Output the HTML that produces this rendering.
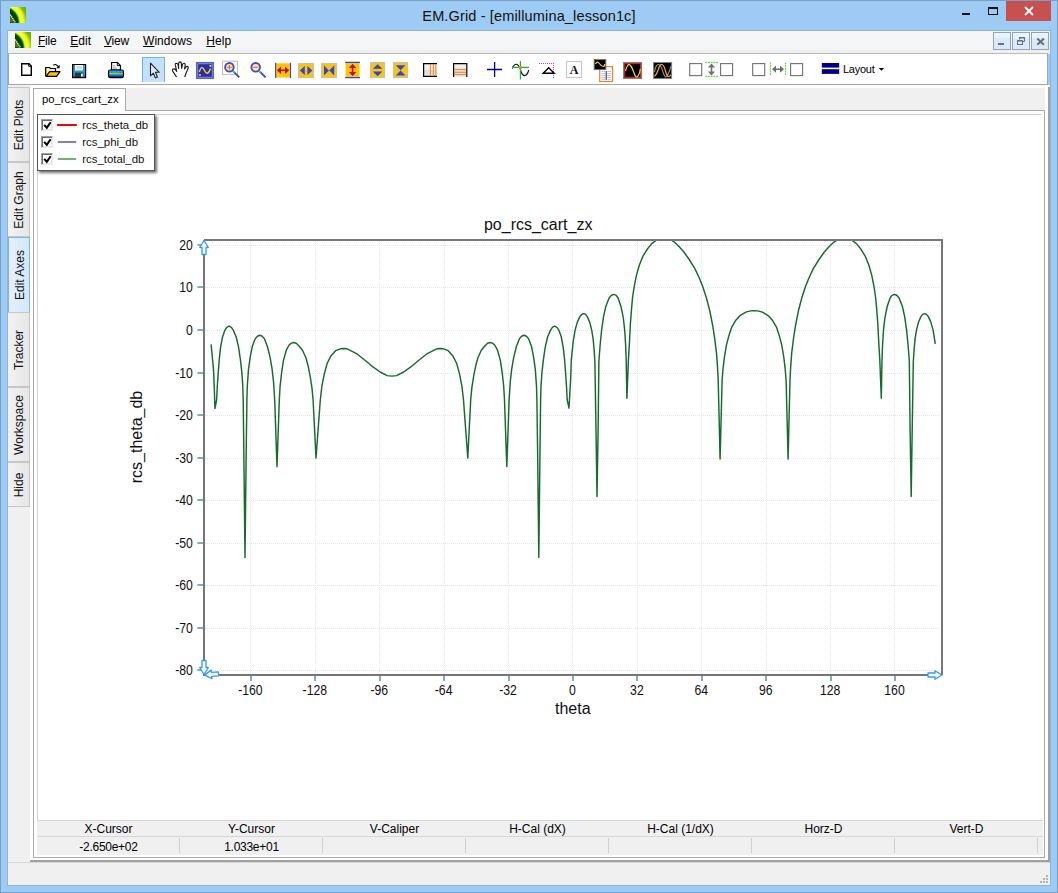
<!DOCTYPE html>
<html><head><meta charset="utf-8"><title>EM.Grid - [emillumina_lesson1c]</title>
<style>
html,body{margin:0;padding:0;}
body{width:1058px;height:893px;position:relative;overflow:hidden;background:#9ecbf3;font-family:"Liberation Sans",sans-serif;font-size:12px;color:#000;}
.abs{position:absolute;}
#frame{left:0;top:0;width:1056px;height:891px;border:1px solid #7a9fc7;}
#title{left:0;top:8px;width:1058px;text-align:center;font-size:14.5px;color:#111;letter-spacing:0.15px;}
#closebtn{left:1006px;top:1px;width:45px;height:20px;background:#c75050;}
#menubar{left:8px;top:31px;width:1042px;height:23px;background:linear-gradient(#f5f6f7 0,#f5f6f7 18px,#eeeff0 19px,#f0f0f0 23px);}
.menu{top:34px;font-size:12px;color:#000;letter-spacing:-0.25px;}
.menu u{text-decoration:underline;text-underline-offset:1px;}
.mdibtn{top:32px;width:18px;height:18px;border:1px solid #8fa4bd;background:linear-gradient(#eef4fc 0,#e9f1fb 30%,#dde9f6 35%,#dce8f5 100%);box-sizing:border-box;}
#toolbar{left:8px;top:53px;width:1040px;height:32px;background:#fff;border:1px solid #a5a5a5;box-sizing:border-box;border-top-color:#b9b9b9;}
#client{left:8px;top:85px;width:1042px;height:777px;background:#f0f0f0;}
#statusbar{left:8px;top:862px;width:1042px;height:23px;background:#f0f0f0;border-top:1px solid #d7d7d7;box-sizing:border-box;}
.vtab{left:8px;width:22px;border:1px solid #c6c6c6;border-left:none;box-sizing:border-box;background:linear-gradient(90deg,#f2f2f2,#e6e6e6);}
.vtab span{position:absolute;left:calc(50% + 0.7px);top:50%;transform:translate(-50%,-50%) rotate(-90deg);white-space:nowrap;font-size:12px;color:#111;}
.vtab.sel{background:linear-gradient(90deg,#e6f1fc,#d3e7fa);border-color:#7eb4ea;}
#tab{left:33px;top:88px;width:93px;height:23px;background:#fff;border:1px solid #a9a9a9;border-bottom:none;box-sizing:border-box;font-size:11.3px;}
#panel{left:33px;top:110px;width:1012px;height:748px;background:#fff;border:1px solid #a9a9a9;box-sizing:border-box;}

#legend{left:37px;top:114px;width:116px;height:55px;background:#fff;border:1px solid #555;box-shadow:2px 2px 2.5px rgba(0,0,0,.55);}
.cb{left:41px;width:12px;height:12px;box-sizing:border-box;border:1px solid #a0a0a0;border-right-color:#ececec;border-bottom-color:#ececec;background:#fff;box-shadow:inset 1px 1px 0 #6a6a6a,inset -1px -1px 0 #e6e6e6;}
.leg{left:82.3px;font-size:11.4px;color:#111;}
.gridh{top:822px;height:15px;font-family:"Liberation Sans",sans-serif;font-size:12px;text-align:center;color:#000;}
.gridv{top:840px;height:15px;font-size:12px;letter-spacing:-0.27px;text-align:center;color:#000;}
.gsep{top:838px;width:1px;height:15px;background:#d0d0d0;}
</style></head><body>
<div id="frame" class="abs"></div>
<div class="abs" style="left:7px;top:30px;width:1044px;height:856px;box-sizing:border-box;border:1px solid #8bb5de"></div>
<!-- title bar -->
<svg class="abs" style="left:10px;top:7px" width="16" height="16" viewBox="0 0 16 16"><defs><radialGradient id="lg1" gradientUnits="userSpaceOnUse" cx="-7.1" cy="15.8" r="28"><stop offset="0" stop-color="#5a8a10"/><stop offset=".37" stop-color="#42740a"/><stop offset=".41" stop-color="#013a00"/><stop offset=".53" stop-color="#024800"/><stop offset=".57" stop-color="#2c9a10"/><stop offset=".61" stop-color="#e4fc30"/><stop offset=".68" stop-color="#ffff3c"/><stop offset=".74" stop-color="#e8f830"/><stop offset=".79" stop-color="#b4ec10"/><stop offset=".86" stop-color="#80b800"/><stop offset="1" stop-color="#74a400"/></radialGradient></defs><rect width="16" height="16" fill="url(#lg1)"/><path d="M0.3 7.6L5.6 16" stroke="#fff" stroke-width="1.3" stroke-dasharray="1.3 0.7" fill="none"/><path d="M0 14.5L3.5 16H0Z" fill="#3a3040"/></svg>
<div id="title" class="abs">EM.Grid - [emillumina_lesson1c]</div>
<div class="abs" style="left:962px;top:13px;width:8px;height:2px;background:#111"></div>
<div class="abs" style="left:988px;top:7px;width:10px;height:8px;border:1px solid #111;border-top-width:2px;box-sizing:border-box"></div>
<div id="closebtn" class="abs"></div>
<svg class="abs" style="left:1024px;top:6px" width="10" height="10" viewBox="0 0 10 10"><path d="M1 1L9 9M9 1L1 9" stroke="#fff" stroke-width="1.8"/></svg>
<!-- menu bar -->
<div id="menubar" class="abs"></div>
<svg class="abs" style="left:15px;top:32px" width="16" height="16" viewBox="0 0 16 16"><rect width="16" height="16" fill="url(#lg1)"/><path d="M0.3 7.6L5.6 16" stroke="#fff" stroke-width="1.3" stroke-dasharray="1.3 0.7" fill="none"/><path d="M0 14.5L3.5 16H0Z" fill="#3a3040"/></svg>
<div class="abs menu" style="left:38px"><u>F</u>ile</div>
<div class="abs menu" style="left:70.3px;letter-spacing:0"><u>E</u>dit</div>
<div class="abs menu" style="left:104px"><u>V</u>iew</div>
<div class="abs menu" style="left:143px;letter-spacing:0.05px"><u>W</u>indows</div>
<div class="abs menu" style="left:206.3px;letter-spacing:0.1px"><u>H</u>elp</div>
<div class="abs mdibtn" style="left:993px"></div>
<div class="abs mdibtn" style="left:1012px"></div>
<div class="abs mdibtn" style="left:1031px"></div>
<div class="abs" style="left:998px;top:43px;width:6px;height:2px;background:#5f7289"></div>
<svg class="abs" style="left:1015.7px;top:35.5px" width="10" height="10" viewBox="0 0 10 10"><path d="M3.5 3.5V1.5H8.5V5.5H6.5" fill="none" stroke="#5f7289" stroke-width="1"/><path d="M3 1.75H9" stroke="#5f7289" stroke-width="1.5"/><rect x="1.5" y="4.5" width="5" height="4" fill="none" stroke="#5f7289"/><path d="M1 4.75H7" stroke="#5f7289" stroke-width="1.5"/></svg>
<svg class="abs" style="left:1036px;top:37px" width="9" height="9" viewBox="0 0 9 9"><path d="M1.3 1.5L7.9 7.7M7.9 1.5L1.3 7.7" stroke="#5f7289" stroke-width="2"/></svg>
<!-- toolbar -->
<div id="toolbar" class="abs"></div>
<div id="tbicons" class="abs" style="left:0;top:0">
<div class="abs" style="left:142px;top:57px;width:23px;height:25px;background:#c4e0fc;border:1px solid #6fb0f0;border-bottom:none;box-sizing:border-box"></div>
<svg class="abs" style="left:0;top:0" width="1058" height="90" viewBox="0 0 1058 90" font-family="Liberation Sans, sans-serif">
<!-- new -->
<path d="M21.7 63.7H29L31.3 66V75.3H21.7Z" fill="#fff" stroke="#000" stroke-width="1.4"/><path d="M28.7 63.7V66.3H31.3" fill="none" stroke="#000" stroke-width="1"/>
<!-- open -->
<path d="M45.7 76V67.5H49.5L50.5 68.5H55.5V72" fill="#fbeeb0" stroke="#000" stroke-width="1.2"/><path d="M46 76.3L49.7 71.7H60L56.5 76.3Z" fill="#f6c414" stroke="#000" stroke-width="1.2" stroke-linejoin="round"/><path d="M53.3 65.3Q56 63.3 58.5 66.8" fill="none" stroke="#000" stroke-width="1.1"/><path d="M59.6 64.8V68.3H56.3Z" fill="#000"/>
<!-- save -->
<rect x="72.6" y="64.6" width="13" height="13" fill="#1d9ee2" stroke="#000" stroke-width="1.2"/><rect x="75" y="65" width="8" height="5.4" fill="#fff"/><rect x="76.3" y="66.2" width="5.6" height="2.6" fill="#d4d4d4"/><rect x="75" y="72.6" width="8.3" height="4.6" fill="#333"/><rect x="81" y="73.6" width="1.8" height="3" fill="#fff"/><rect x="73.2" y="75.3" width="1.6" height="1.8" fill="#4848d0"/><rect x="83.6" y="75.3" width="1.6" height="1.8" fill="#4848d0"/><rect x="84" y="65.6" width="1" height="1" fill="#ddd"/>
<!-- print -->
<path d="M111.6 70V62.5H117.5L120.4 65.4V70Z" fill="#fff" stroke="#000" stroke-width="1.1"/><path d="M117.3 62.5V65.6H120.4" fill="none" stroke="#000" stroke-width="1"/><path d="M113 65.3H115M113 67H116M113 68.6H117" stroke="#999" stroke-width=".8"/>
<rect x="108.5" y="70" width="15" height="7.6" rx="1.6" fill="#1a2a9a" stroke="#000" stroke-width="1.1"/><rect x="109.2" y="70.6" width="13.6" height="1.5" fill="#1fa4ea"/><rect x="109.2" y="72.1" width="13.6" height="1.1" fill="#30c050"/><rect x="109.2" y="73.2" width="13.6" height="1" fill="#e8e030"/><rect x="109.2" y="74.2" width="13.6" height="1.4" fill="#1fa4ea"/><rect x="119.5" y="72.2" width="2" height="1" fill="#e03030"/>
<!-- pointer -->
<path d="M150.5 63.2V75.8L153.3 73.2L155.4 77.9L157.4 77L155.4 72.3H159.3Z" fill="#dcecfc" stroke="#222" stroke-width="1.1" stroke-linejoin="round"/>
<!-- hand -->
<path d="M176.6 77L173 71.6Q171.7 69.7 173.2 69Q174.6 68.5 175.7 70L176.7 71.4L175.3 64.9Q175.1 63.2 176.6 63.2Q177.9 63.3 178.1 65L178.6 68.4L178.6 63.5Q178.8 61.9 180 61.9Q181.3 62 181.4 63.5L181.6 68.3L182.5 64.6Q183 63 184.3 63.3Q185.5 63.7 185.2 65.3L184.5 69L186 67Q186.9 65.9 187.8 66.5Q188.6 67.2 188 68.6L186 73.2L184.7 77" fill="#fff" stroke="#1c1c1c" stroke-width="1.15" stroke-linejoin="round"/>
<!-- scope -->
<rect x="196.6" y="62.6" width="16.8" height="15.8" fill="#2a2ea0" stroke="#4a66e0" stroke-width="1.3"/><rect x="197.8" y="63.8" width="14.4" height="13.4" fill="none" stroke="#a8b8f0" stroke-width=".7"/><path d="M199.3 72Q201.5 64 204.5 70.5T210.5 68.5" fill="none" stroke="#f4d820" stroke-width="1.4"/><rect x="209.5" y="65" width="1.8" height="1.8" fill="#f4d820"/><rect x="199" y="74" width="1.8" height="1.8" fill="#f4d820"/>
<!-- zoom in -->
<rect x="222.5" y="61.2" width="15" height="13.4" fill="none" stroke="#bdbdbd" stroke-width="1"/>
<path d="M232.8 70.8L239.3 77.3" stroke="#3b48c8" stroke-width="1.9"/><path d="M232.6 70.6L234.4 72.4" stroke="#9ad020" stroke-width="1.4"/><circle cx="229.4" cy="67.3" r="4.3" fill="#f7e7b7" stroke="#3b4ed0" stroke-width="1.9"/><path d="M227 67.3H231.8M229.4 64.9V69.7" stroke="#f07010" stroke-width="1.1"/>
<!-- zoom out -->
<path d="M259.1 70.8L265.6 77.3" stroke="#3b48c8" stroke-width="1.9"/><path d="M258.9 70.6L260.7 72.4" stroke="#9ad020" stroke-width="1.4"/><circle cx="255.7" cy="67.3" r="4.3" fill="#f7e7b7" stroke="#3b4ed0" stroke-width="1.9"/><path d="M253.4 67.3H258" stroke="#f07010" stroke-width="1.2"/>
<!-- hfit -->
<rect x="275.2" y="63.3" width="15.6" height="14.2" fill="#fcc40c"/><path d="M275.6 62.8V78M290.5 62.8V78" stroke="#3048d8" stroke-width="1.1"/><path d="M276.8 70.3L281 66.6V69.5H285V66.6L289.2 70.3L285 74V71.1H281V74Z" fill="#c0101c"/>
<!-- hexpand -->
<rect x="298.6" y="63.6" width="15" height="14" fill="#fcc40c" stroke="#bdbdbd" stroke-width="1"/><path d="M299.8 70.5L304.8 66V75ZM312.4 70.5L307.4 66V75Z" fill="#3048d0"/>
<!-- hshrink -->
<rect x="321.6" y="63.6" width="15" height="14" fill="#fcc40c" stroke="#bdbdbd" stroke-width="1"/><path d="M324 65.6L329 70.5L324 75.4ZM334.2 65.6L329.2 70.5L334.2 75.4Z" fill="#3048d0"/>
<!-- vfit -->
<rect x="345.6" y="62.3" width="14" height="15.4" fill="#fcc40c"/><path d="M345.2 62.4H360M345.2 77.6H360" stroke="#3048d8" stroke-width="1.1"/><path d="M352.6 63.8L356.3 68H353.4V72H356.3L352.6 76.2L348.9 72H351.8V68H348.9Z" fill="#c0101c"/>
<!-- vexpand -->
<rect x="370.6" y="62.6" width="14" height="15" fill="#fcc40c" stroke="#bdbdbd" stroke-width="1"/><path d="M377.6 64.2L382.4 68.8H372.8ZM377.6 76.2L382.4 71.4H372.8Z" fill="#3048d0"/>
<!-- vshrink -->
<rect x="393.6" y="62.6" width="14" height="15" fill="#fcc40c" stroke="#bdbdbd" stroke-width="1"/><path d="M395.8 65.2H405.4L400.6 70.2ZM395.8 75.4H405.4L400.6 70.4Z" fill="#3048d0"/>
<!-- vgrid -->
<defs><linearGradient id="gg" x1="0" y1="0" x2="0" y2="1"><stop offset="0" stop-color="#f2f2f2"/><stop offset=".5" stop-color="#ececec"/><stop offset=".5" stop-color="#dcdcdc"/><stop offset="1" stop-color="#e8e8e8"/></linearGradient></defs>
<rect x="423.5" y="63.6" width="13.5" height="13" fill="url(#gg)"/><path d="M437 63.6H423.6V76.4H437" fill="none" stroke="#000" stroke-width="1.2"/><path d="M430.4 64.2V75.8M433.3 64.2V75.8M435.8 64.2V75.8" stroke="#f48020" stroke-width="1"/>
<!-- hgrid -->
<rect x="453.6" y="63.6" width="13" height="13.5" fill="url(#gg)"/><path d="M453.6 77V63.6H466.8V77" fill="none" stroke="#000" stroke-width="1.2"/><path d="M454.2 69.4H466.2M454.2 72.3H466.2M454.2 74.6H466.2" stroke="#f48020" stroke-width="1"/>
<!-- crosshair -->
<path d="M487 69.5H502M494.6 62V77" stroke="#00009c" stroke-width="1.3"/>
<!-- tracker -->
<path d="M512.3 68.5Q514 64 516.5 64.2Q518.8 64.6 520.4 69.5Q522 75.6 524.6 75.6Q527.2 75.5 528.8 70" fill="none" stroke="#111" stroke-width="1.1"/><path d="M520.4 61V79.6M512 67.3H529" stroke="#22b040" stroke-width="1.2"/><rect x="519" y="66" width="2.8" height="2.8" fill="#f48020"/>
<!-- delta -->
<path d="M539 63.5H553.5V78" fill="none" stroke="#ff20e8" stroke-width="1.1" stroke-dasharray="1 1"/><path d="M543.2 73.2L548.7 67.7L554.2 73.2Z" fill="none" stroke="#000" stroke-width="1.4" stroke-linejoin="miter"/>
<!-- A -->
<rect x="566.6" y="61.6" width="15" height="16" fill="#fff" stroke="#c4c4c4" stroke-width="1"/><text x="574.2" y="73.6" font-family="Liberation Serif, serif" font-weight="bold" font-size="12" text-anchor="middle" fill="#101030">A</text>
<!-- copy -->
<rect x="599.7" y="66.7" width="12.8" height="14.8" fill="#fff" stroke="#f08030" stroke-width="1.2"/><path d="M601.5 71.5H605M601.5 73.5H605M601.5 75.5H605M601.5 77.5H605M601.5 79.3H605M607.5 71.5H611M607.5 73.5H611M607.5 75.5H611M607.5 77.5H611M607.5 79.3H611" stroke="#b0b0b0" stroke-width=".8"/><path d="M606.2 71V80" stroke="#3040d0" stroke-width="1.2"/><rect x="594.2" y="59.6" width="11.6" height="10" fill="#000" stroke="#707070" stroke-width="1"/><path d="M595.5 64Q597 60.5 599.3 63.5T603.2 66.5T604.8 64" fill="none" stroke="#f4d820" stroke-width="1.2"/>
<!-- red scope -->
<rect x="623.6" y="62.5" width="18" height="16" fill="#000" stroke="#808080" stroke-width="1"/><rect x="624.7" y="63.6" width="15.8" height="13.8" fill="none" stroke="#e02020" stroke-width="1.1"/><path d="M625.5 71Q627.5 63 630 65Q632 67 634 73T638 76T640.3 69" fill="none" stroke="#f4e020" stroke-width="1.2"/>
<!-- dual scope -->
<rect x="653.6" y="62.5" width="18" height="16" fill="#000" stroke="#808080" stroke-width="1"/><path d="M654.5 72Q656 64 658.5 64.5Q661 65 663 72T667 76T671 66" fill="none" stroke="#909090" stroke-width="1.1"/><path d="M654.5 76.5Q657 74 658.5 69T662 64.5Q664 65 665.5 71T669 76.5L671 75" fill="none" stroke="#f4b010" stroke-width="1.2"/>
<!-- check group 1 -->
<rect x="689.7" y="63.6" width="12" height="12" fill="#fff" stroke="#707070" stroke-width="1.1"/>
<path d="M705.2 62.4H718M705.2 76.3H718" stroke="#40e020" stroke-width="1" stroke-dasharray="2 .7"/><path d="M711.5 63.6L715.1 67.6H712.3V71.4H715.1L711.5 75.4L707.9 71.4H710.7V67.6H707.9Z" fill="#707070"/>
<rect x="720.6" y="63.6" width="12" height="12" fill="#fff" stroke="#707070" stroke-width="1.1"/>
<!-- check group 2 -->
<rect x="752.7" y="63.6" width="12" height="12" fill="#fff" stroke="#707070" stroke-width="1.1"/>
<path d="M770.4 62.4V75M785.6 62.4V75" stroke="#40e020" stroke-width="1" stroke-dasharray="2 .7"/><path d="M772 69.2L776 65.6V68.4H780V65.6L784 69.2L780 72.8V70H776V72.8Z" fill="#707070"/>
<rect x="790.6" y="63.6" width="12" height="12" fill="#fff" stroke="#707070" stroke-width="1.1"/>
<!-- layout -->
<rect x="821.8" y="63" width="17.4" height="4.6" fill="#000080"/><rect x="821.8" y="69.2" width="17.4" height="4.7" fill="#000080"/>
<text x="843" y="73" font-size="11" letter-spacing="-0.25" fill="#000">Layout</text><path d="M878.8 68H884.2L881.5 70.8Z" fill="#000"/>
</svg>

</div>
<!-- client -->
<div id="client" class="abs"></div>
<div id="statusbar" class="abs"></div>
<div class="abs" style="left:30px;top:85px;width:1020px;height:777px;background:#a0a0a0"></div>
<div class="abs" style="left:30px;top:85px;width:1018px;height:775px;background:#fff"></div>
<div class="abs" style="left:1048px;top:85px;width:2px;height:2px;background:#fff"></div>
<div class="abs" style="left:33px;top:88px;width:1012px;height:23px;background:#f0f0f0"></div>
<div class="abs vtab" style="top:87px;height:75px"><span>Edit Plots</span></div>
<div class="abs vtab" style="top:162px;height:75px"><span>Edit Graph</span></div>
<div class="abs vtab sel" style="top:237px;height:76px;border-left:1px solid #7eb4ea"><span>Edit Axes</span></div>
<div class="abs vtab" style="top:312px;height:75px"><span>Tracker</span></div>
<div class="abs vtab" style="top:387px;height:75px"><span>Workspace</span></div>
<div class="abs vtab" style="top:462px;height:45px"><span>Hide</span></div>
<div id="panel" class="abs"></div>
<div id="tab" class="abs"><span style="position:absolute;left:8px;top:4px">po_rcs_cart_zx</span></div>
<div class="abs" style="left:37px;top:114px;width:1005px;height:706px;border-left:1px solid #d4d4d4;border-top:1px solid #d4d4d4;box-sizing:border-box"></div>
<svg class="abs" style="left:0;top:0" width="1058" height="893" viewBox="0 0 1058 893" font-family="Liberation Sans, sans-serif">
<path d="M205 245.5H941M205 287.5H941M205 330.5H941M205 373.5H941M205 415.5H941M205 458.5H941M205 500.5H941M205 543.5H941M205 585.5H941M205 628.5H941M205 670.5H941M250.5 241V674M315.5 241V674M379.5 241V674M444.5 241V674M508.5 241V674M572.5 241V674M637.5 241V674M701.5 241V674M766.5 241V674M830.5 241V674M894.5 241V674" stroke="#e6e6e6" stroke-width="1" stroke-dasharray="1 1" fill="none"/>
<path d="M197.4 245H203M197.4 287H203M197.4 330H203M197.4 373H203M197.4 415H203M197.4 458H203M197.4 500H203M197.4 543H203M197.4 585H203M197.4 628H203M197.4 670H203M251 676V681M315 676V681M380 676V681M444 676V681M509 676V681M573 676V681M637 676V681M702 676V681M766 676V681M831 676V681M895 676V681" stroke="#76b5af" stroke-width="2" fill="none"/>
<clipPath id="pc"><rect x="205" y="240" width="736" height="434"/></clipPath>
<path d="M211.1 344.4L212.3 357.0L213.5 369.1L214.4 391.0L214.9 408.5L216.6 400.0L217.3 386.2L218.2 372.9L219.2 359.7L220.6 347.4L222.5 337.0L224.8 330.4L226.8 327.3L229.1 326.1L231.4 327.3L233.4 330.4L236.2 337.0L238.6 347.4L240.4 359.7L241.9 372.9L242.8 386.2L243.2 400.0L243.8 450.0L245.0 557.5L246.2 450.0L246.9 400.0L247.3 386.2L248.5 369.1L250.4 355.9L252.3 346.5L255.1 338.9L257.4 336.2L259.8 335.3L262.2 336.2L264.5 338.9L267.4 346.5L270.2 357.8L272.1 369.1L273.5 381.4L274.7 400.0L277.0 466.6L279.3 400.0L280.1 386.2L281.6 372.9L283.4 360.6L286.3 350.2L289.1 345.0L291.4 343.1L293.8 342.5L296.2 343.3L298.6 345.5L302.5 350.2L305.9 357.8L308.2 366.3L310.1 375.8L312.0 388.1L313.1 400.0L316.0 458.0L320.3 400.0L321.9 386.2L324.3 373.9L327.1 363.5L330.9 355.9L335.6 350.7L340.4 348.8L343.7 348.5L347.0 348.8L351.7 351.2L357.4 354.2L363.1 358.8L371.6 365.8L380.1 372.0L387.2 375.6L391.9 376.1L396.6 375.6L403.7 372.0L412.2 365.8L420.7 358.8L426.4 354.2L432.1 351.2L436.8 348.8L440.1 348.5L443.4 348.8L448.2 350.7L452.9 355.9L456.7 363.5L459.5 373.9L461.9 386.2L463.5 400.0L467.8 458.0L470.7 400.0L471.8 388.1L473.7 375.8L475.6 366.3L477.9 357.8L481.3 350.2L485.2 345.5L487.6 343.3L490.0 342.5L492.4 343.1L494.7 345.0L497.5 350.2L500.4 360.6L502.2 372.9L503.7 386.2L504.5 400.0L506.8 466.6L509.1 400.0L510.3 381.4L511.7 369.1L513.6 357.8L516.4 346.5L519.3 338.9L521.6 336.2L524.0 335.3L526.4 336.2L528.7 338.9L531.5 346.5L533.4 355.9L535.3 369.1L536.5 386.2L536.9 400.0L537.6 450.0L538.8 557.5L540.0 450.0L540.6 400.0L541.0 386.2L541.9 372.9L543.4 359.7L545.2 347.4L547.6 337.0L550.4 330.4L552.4 327.3L554.7 326.1L557.0 327.3L559.0 330.4L561.3 337.0L563.2 347.4L564.6 359.7L565.6 372.9L566.5 386.2L567.2 400.0L569.0 408.1L570.6 380.0L571.3 360.0L573.2 341.4L575.1 330.1L577.5 321.6L580.3 315.9L582.0 314.2L583.8 313.6L585.6 314.4L587.4 316.9L589.8 322.5L591.7 330.1L593.1 338.6L594.0 348.1L594.9 362.0L596.0 430.0L597.0 496.6L598.1 430.0L598.9 361.0L600.2 344.3L601.6 330.1L603.5 316.9L605.8 306.5L609.1 298.0L611.5 295.3L613.9 294.4L616.2 295.4L618.1 298.0L621.0 306.5L623.3 317.8L624.7 330.1L625.6 344.3L626.2 360.0L626.9 398.2L628.4 360.0L629.5 341.4L630.4 323.5L631.5 309.4L632.5 298.0L634.2 286.7L636.4 275.4L639.3 265.2L642.7 256.7L647.2 249.3L651.8 243.6L656.3 240.2L659.1 239.3L664.5 238.6L669.9 239.3L673.3 241.3L677.8 245.3L683.5 251.5L689.2 259.5L694.9 268.6L699.4 278.2L702.8 286.7L706.3 297.5L709.7 310.5L712.7 325.5L714.6 337.8L716.5 352.9L717.6 368.1L718.2 380.0L720.1 459.0L722.1 380.0L723.1 368.1L724.5 356.7L726.4 345.4L728.8 335.9L731.6 327.4L735.4 320.8L740.1 315.6L745.8 312.1L750.5 310.9L754.1 310.7L757.7 310.9L762.4 312.1L768.1 315.6L772.8 320.8L776.6 327.4L779.4 335.9L781.8 345.4L783.7 356.7L785.1 368.1L786.1 380.0L788.1 459.0L790.0 380.0L790.6 368.1L791.7 352.9L793.6 337.8L795.5 325.5L798.5 310.5L801.9 297.5L805.4 286.7L808.8 278.2L813.3 268.6L819.0 259.5L824.7 251.5L830.4 245.3L834.9 241.3L838.3 239.3L843.7 238.6L849.1 239.3L851.9 240.2L856.4 243.6L861.0 249.3L865.5 256.7L868.9 265.2L871.8 275.4L874.0 286.7L875.7 298.0L876.7 309.4L877.8 323.5L878.7 341.4L879.8 360.0L881.3 398.2L882.0 360.0L882.6 344.3L883.5 330.1L884.9 317.8L887.2 306.5L890.1 298.0L892.0 295.4L894.3 294.4L896.7 295.3L899.1 298.0L902.4 306.5L904.7 316.9L906.6 330.1L908.0 344.3L909.3 361.0L910.1 430.0L911.2 496.6L912.2 430.0L913.3 362.0L914.2 348.1L915.1 338.6L916.5 330.1L918.4 322.5L920.8 316.9L922.6 314.4L924.4 313.6L926.2 314.2L927.9 315.9L930.7 321.6L933.1 330.1L935.3 343.8" stroke="#176a2e" stroke-width="1.45" fill="none" stroke-linejoin="round" clip-path="url(#pc)"/>
<path d="M204 240V675H942" stroke="#757575" stroke-width="2" fill="none"/>
<path d="M204 240H942V675" stroke="#777777" stroke-width="2" fill="none"/>
<text transform="translate(192.8 249.8) scale(0.94 1.09)" font-size="13" text-anchor="end" fill="#111">20</text>
<text transform="translate(192.8 291.8) scale(0.94 1.09)" font-size="13" text-anchor="end" fill="#111">10</text>
<text transform="translate(192.8 334.8) scale(0.94 1.09)" font-size="13" text-anchor="end" fill="#111">0</text>
<text transform="translate(192.8 377.8) scale(0.94 1.09)" font-size="13" text-anchor="end" fill="#111">-10</text>
<text transform="translate(192.8 419.8) scale(0.94 1.09)" font-size="13" text-anchor="end" fill="#111">-20</text>
<text transform="translate(192.8 462.8) scale(0.94 1.09)" font-size="13" text-anchor="end" fill="#111">-30</text>
<text transform="translate(192.8 504.8) scale(0.94 1.09)" font-size="13" text-anchor="end" fill="#111">-40</text>
<text transform="translate(192.8 547.8) scale(0.94 1.09)" font-size="13" text-anchor="end" fill="#111">-50</text>
<text transform="translate(192.8 589.8) scale(0.94 1.09)" font-size="13" text-anchor="end" fill="#111">-60</text>
<text transform="translate(192.8 632.8) scale(0.94 1.09)" font-size="13" text-anchor="end" fill="#111">-70</text>
<text transform="translate(192.8 674.8) scale(0.94 1.09)" font-size="13" text-anchor="end" fill="#111">-80</text>
<text transform="translate(250.4 694.9) scale(0.94 1.09)" font-size="13" text-anchor="middle" fill="#111">-160</text>
<text transform="translate(314.8 694.9) scale(0.94 1.09)" font-size="13" text-anchor="middle" fill="#111">-128</text>
<text transform="translate(379.2 694.9) scale(0.94 1.09)" font-size="13" text-anchor="middle" fill="#111">-96</text>
<text transform="translate(443.6 694.9) scale(0.94 1.09)" font-size="13" text-anchor="middle" fill="#111">-64</text>
<text transform="translate(508.0 694.9) scale(0.94 1.09)" font-size="13" text-anchor="middle" fill="#111">-32</text>
<text transform="translate(572.5 694.9) scale(0.94 1.09)" font-size="13" text-anchor="middle" fill="#111">0</text>
<text transform="translate(636.9 694.9) scale(0.94 1.09)" font-size="13" text-anchor="middle" fill="#111">32</text>
<text transform="translate(701.3 694.9) scale(0.94 1.09)" font-size="13" text-anchor="middle" fill="#111">64</text>
<text transform="translate(765.7 694.9) scale(0.94 1.09)" font-size="13" text-anchor="middle" fill="#111">96</text>
<text transform="translate(830.1 694.9) scale(0.94 1.09)" font-size="13" text-anchor="middle" fill="#111">128</text>
<text transform="translate(894.5 694.9) scale(0.94 1.09)" font-size="13" text-anchor="middle" fill="#111">160</text>
<text x="538.2" y="229.5" font-size="16" text-anchor="middle" fill="#111">po_rcs_cart_zx</text>
<text x="572.8" y="714" font-size="16" text-anchor="middle" fill="#111">theta</text>
<text transform="translate(142 437) rotate(-90)" font-size="16" text-anchor="middle" fill="#111">rcs_theta_db</text>
<path transform="translate(204 240.5) rotate(0)" d="M0 0L4.3 7H2V14H-2V7H-4.3Z" fill="#f4f8ff" stroke="#3a97f5" stroke-width="1.3" stroke-linejoin="round"/>
<path transform="translate(204 674.5) rotate(180)" d="M0 0L4.3 7H2V14H-2V7H-4.3Z" fill="#f4f8ff" stroke="#3a97f5" stroke-width="1.3" stroke-linejoin="round"/>
<path transform="translate(204.6 674.9) rotate(-94)" d="M0 0L4.3 7H2V14H-2V7H-4.3Z" fill="#f4f8ff" stroke="#3a97f5" stroke-width="1.3" stroke-linejoin="round"/>
<path transform="translate(942 675) rotate(90)" d="M0 0L4.3 7H2V14H-2V7H-4.3Z" fill="#f4f8ff" stroke="#3a97f5" stroke-width="1.3" stroke-linejoin="round"/>
</svg><!-- legend -->
<div id="legend" class="abs"></div>
<div class="abs cb" style="top:119px"></div>
<div class="abs cb" style="top:136px"></div>
<div class="abs cb" style="top:153px"></div>
<svg class="abs" style="left:37px;top:114px" width="120" height="58" viewBox="0 0 120 58">
<g fill="none" stroke="#000" stroke-width="2"><path d="M7.2 10.8L9.8 13.8L13.6 8.2"/><path d="M7.2 27.8L9.8 30.8L13.6 25.2"/><path d="M7.2 44.8L9.8 47.8L13.6 42.2"/></g>
<path d="M20.8 11H39" stroke="#fa0000" stroke-width="2.2" stroke-linecap="round"/>
<path d="M20.8 28H39.2" stroke="#7272ba" stroke-width="1.8"/>
<path d="M20.8 45H39.2" stroke="#60aa66" stroke-width="1.8"/>
</svg>
<div class="abs leg" style="top:119px">rcs_theta_db</div>
<div class="abs leg" style="top:136px">rcs_phi_db</div>
<div class="abs leg" style="top:153px">rcs_total_db</div>
<!-- cursor grid -->
<div class="abs" style="left:37px;top:820px;width:1006px;height:35px;background:#f0f0f0;border-top:1px solid #d6d6d6;box-sizing:border-box"></div>
<div class="abs" style="left:37px;top:836px;width:1006px;height:1px;background:#d6d6d6"></div>
<div class="abs gridh" style="left:37px;width:143px">X-Cursor</div>
<div class="abs gridh" style="left:180px;width:143px">Y-Cursor</div>
<div class="abs gridh" style="left:323px;width:143px">V-Caliper</div>
<div class="abs gridh" style="left:466px;width:143px">H-Cal (dX)</div>
<div class="abs gridh" style="left:609px;width:143px">H-Cal (1/dX)</div>
<div class="abs gridh" style="left:752px;width:143px">Horz-D</div>
<div class="abs gridh" style="left:895px;width:143px">Vert-D</div>
<div class="abs gridv" style="left:37px;width:143px">-2.650e+02</div>
<div class="abs gridv" style="left:180px;width:143px">1.033e+01</div>
<div class="abs gsep" style="left:179px"></div>
<div class="abs gsep" style="left:322px"></div>
<div class="abs gsep" style="left:465px"></div>
<div class="abs gsep" style="left:608px"></div>
<div class="abs gsep" style="left:751px"></div>
<div class="abs gsep" style="left:894px"></div>
<div class="abs gsep" style="left:1037px"></div>
<!-- size grip -->
<svg class="abs" style="left:1038px;top:873px" width="12" height="12" viewBox="0 0 12 12" fill="#b4b4b4"><rect x="8" y="2" width="2" height="2"/><rect x="5" y="5" width="2" height="2"/><rect x="8" y="5" width="2" height="2"/><rect x="2" y="8" width="2" height="2"/><rect x="5" y="8" width="2" height="2"/><rect x="8" y="8" width="2" height="2"/></svg>

</body></html>
